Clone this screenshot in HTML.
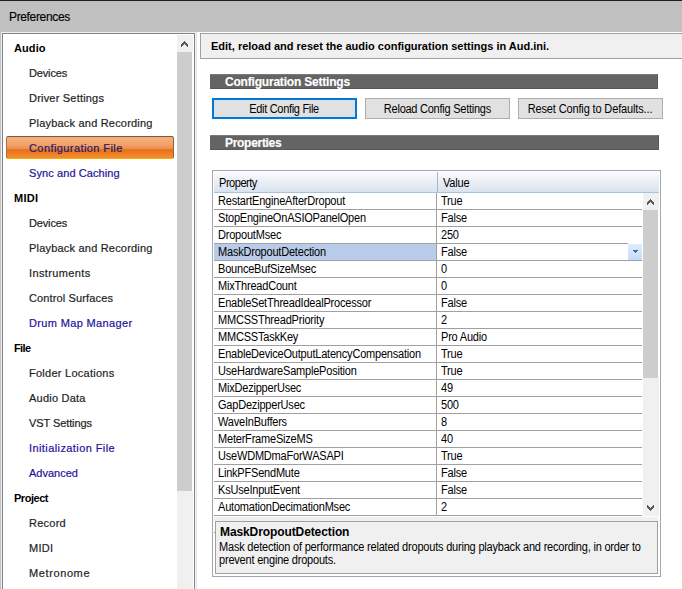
<!DOCTYPE html>
<html><head><meta charset="utf-8">
<style>
*{margin:0;padding:0;box-sizing:border-box}
html,body{width:682px;height:589px;overflow:hidden;background:#fff;position:relative;font-family:"Liberation Sans",sans-serif}
.a{position:absolute}
.t{position:absolute;white-space:pre;line-height:13px;font-size:11px;color:#000}
#title{left:0;top:0;width:682px;height:32px;background:#c0c0c0;border-top:1px solid #1e1e1e}
#title .tt{left:9px;top:9px;font-size:12px;line-height:14px;color:#000;letter-spacing:-0.35px;-webkit-text-stroke:0.15px #000}
#lp{left:1px;top:32px;width:195px;height:600px;border-top:1px solid #f0f0f0;border-left:1px solid #f0f0f0}
#lpb{left:2px;top:33px;width:193px;height:600px;border:1px solid #7d838d;background:#fff}
.nav{position:absolute;white-space:pre;font-size:11px;line-height:13px;color:#1e1e1e;-webkit-text-stroke:0.2px currentColor}
.nav.h{font-weight:bold;color:#000;-webkit-text-stroke:0}
.nav.b{color:#24109c}
#sel{left:6px;top:136px;width:168px;height:23px;border-radius:2px;
 background:linear-gradient(#f6b07c 0,#f2a36c 35%,#ec8c52 58%,#e86e12 60%,#ef8026 80%,#f48c34 100%);
 border-top:1px solid #7a5a36;border-left:1px solid #b07040;border-right:1px solid #8a6a40;border-bottom:1px solid #ffac00}
.sb-btn{background:#f0f0f0}
.thumb{background:#cdcdcd}
#hdr{left:200px;top:33px;width:490px;height:26px;background:#f0f0f0;border:1px solid #a0a0a0}
.bar{position:absolute;left:210px;height:15px;background:#646464;border-top:1px solid #7a7a7a;border-right:1px solid #585858;border-bottom:1px solid #585858}
.bar span{position:absolute;left:15px;top:1px;font-weight:bold;font-size:12px;line-height:13px;color:#fff;-webkit-text-stroke:0.15px #fff;letter-spacing:-0.2px;white-space:pre}
.btn{position:absolute;top:98px;width:145px;height:21px;background:#e1e1e1;border:1px solid #adadad;font-size:12px;line-height:21px;text-align:center;letter-spacing:-0.33px;color:#000}
.btn span{display:inline-block;transform:scaleX(0.9167);transform-origin:50% 0;white-space:pre}
.btn.f{border:2px solid #0078d7;line-height:19px}
#grid{left:212px;top:170px;width:449px;height:407px;border:1px solid #a3a7ad;background:#fff}
#gh{left:214px;top:171px;width:445px;height:22px;background:linear-gradient(#fbfcfe,#d9e2ed);border-bottom:1px solid #a9c1dc}
.row{position:absolute;left:214px;width:428px;height:17px;border-bottom:1px solid #a0a0a0}
.row span{position:absolute;top:1px;font-size:12px;line-height:14px;letter-spacing:-0.22px;white-space:pre;color:#000;transform:scaleX(0.9167);transform-origin:0 0}
.row .p{left:4px}
.row .v{left:227px}
.vdiv{position:absolute;left:436px;top:193px;width:1px;height:323px;background:#a0a0a0}
.chev{position:absolute}
.ms{font-size:12px;line-height:14px;letter-spacing:-0.22px;transform:scaleX(0.9167);transform-origin:0 0}
</style></head><body>
<div id="title" class="a"><span class="t tt">Preferences</span></div>
<div class="a" style="left:0;top:32px;width:1px;height:557px;background:#c0c0c0"></div>
<div id="lp" class="a"></div>
<div id="lpb" class="a"></div>
<!-- left scrollbar -->
<div class="a sb-btn" style="left:177px;top:35px;width:16px;height:17px"></div>
<div class="a thumb" style="left:177px;top:52px;width:15px;height:439px"></div>
<div class="a sb-btn" style="left:177px;top:491px;width:16px;height:100px"></div>
<svg class="a" style="left:181px;top:41px" width="7" height="6" shape-rendering="crispEdges"><path fill="#5a5a5a" d="M3 0h1v1h-1zM2 1h1v1h-1zM3 1h1v1h-1zM4 1h1v1h-1zM1 2h1v1h-1zM2 2h1v1h-1zM3 2h1v1h-1zM4 2h1v1h-1zM5 2h1v1h-1zM0 3h1v1h-1zM1 3h1v1h-1zM2 3h1v1h-1zM4 3h1v1h-1zM5 3h1v1h-1zM6 3h1v1h-1zM0 4h1v1h-1zM1 4h1v1h-1zM5 4h1v1h-1zM6 4h1v1h-1zM0 5h1v1h-1zM6 5h1v1h-1z"/></svg>
<div id="sel" class="a"></div>
<div class="nav h" style="left:14px;top:42px;letter-spacing:0.1px">Audio</div>
<div class="nav" style="left:29px;top:67px;letter-spacing:-0.15px">Devices</div>
<div class="nav" style="left:29px;top:92px;letter-spacing:0.2px">Driver Settings</div>
<div class="nav" style="left:29px;top:117px;letter-spacing:0.2px">Playback and Recording</div>
<div class="nav b" style="color:#1c1c6e;left:29px;top:142px;letter-spacing:0.42px">Configuration File</div>
<div class="nav b" style="left:29px;top:167px;letter-spacing:0.09px">Sync and Caching</div>
<div class="nav h" style="left:14px;top:192px;letter-spacing:0.3px">MIDI</div>
<div class="nav" style="left:29px;top:217px;letter-spacing:-0.15px">Devices</div>
<div class="nav" style="left:29px;top:242px;letter-spacing:0.2px">Playback and Recording</div>
<div class="nav" style="left:29px;top:267px;letter-spacing:0.37px">Instruments</div>
<div class="nav" style="left:29px;top:292px;letter-spacing:0.13px">Control Surfaces</div>
<div class="nav b" style="left:29px;top:317px;letter-spacing:0.35px">Drum Map Manager</div>
<div class="nav h" style="left:14px;top:342px;letter-spacing:-0.62px">File</div>
<div class="nav" style="left:29px;top:367px;letter-spacing:0.26px">Folder Locations</div>
<div class="nav" style="left:29px;top:392px;letter-spacing:0.22px">Audio Data</div>
<div class="nav" style="left:29px;top:417px;letter-spacing:-0.09px">VST Settings</div>
<div class="nav b" style="left:29px;top:442px;letter-spacing:0.41px">Initialization File</div>
<div class="nav b" style="left:29px;top:467px;letter-spacing:0.0px">Advanced</div>
<div class="nav h" style="left:14px;top:492px;letter-spacing:-0.47px">Project</div>
<div class="nav" style="left:29px;top:517px;letter-spacing:0.24px">Record</div>
<div class="nav" style="left:29px;top:542px;letter-spacing:0.3px">MIDI</div>
<div class="nav" style="left:29px;top:567px;letter-spacing:0.61px">Metronome</div>
<!-- splitter -->
<div class="a" style="left:195px;top:32px;width:1px;height:557px;background:#f4f4f4"></div>
<div class="a" style="left:196px;top:32px;width:1px;height:557px;background:#e3e3e3"></div>
<!-- header -->
<div id="hdr" class="a"><span class="t" style="left:10px;top:6px;font-weight:bold">Edit, reload and reset the audio configuration settings in Aud.ini.</span></div>
<div class="bar" style="top:74px;width:448px"><span>Configuration Settings</span></div>
<div class="btn f" style="left:212px"><span>Edit Config File</span></div>
<div class="btn" style="left:365px;letter-spacing:-0.27px"><span>Reload Config Settings</span></div>
<div class="btn" style="left:518px;letter-spacing:-0.15px"><span>Reset Config to Defaults...</span></div>
<div class="bar" style="top:135px;width:449px"><span style="letter-spacing:-0.3px">Properties</span></div>
<!-- grid -->
<div id="grid" class="a"></div>
<div id="gh" class="a"></div>
<div class="a" style="left:437px;top:172px;width:1px;height:20px;background:#a2b7d0"></div>
<span class="t ms" style="left:219px;top:176px;letter-spacing:-0.5px">Property</span>
<span class="t ms" style="left:443px;top:176px">Value</span>
<div id="rows">
<div class="row" style="top:193px"><span class="p">RestartEngineAfterDropout</span><span class="v">True</span></div>
<div class="row" style="top:210px"><span class="p">StopEngineOnASIOPanelOpen</span><span class="v">False</span></div>
<div class="row" style="top:227px"><span class="p">DropoutMsec</span><span class="v">250</span></div>
<div class="row" style="top:244px"><div class="a" style="left:0;top:0;width:222px;height:16px;background:#b8cbe9"></div><span class="p">MaskDropoutDetection</span><span class="v">False</span></div>
<div class="row" style="top:261px"><span class="p">BounceBufSizeMsec</span><span class="v">0</span></div>
<div class="row" style="top:278px"><span class="p">MixThreadCount</span><span class="v">0</span></div>
<div class="row" style="top:295px"><span class="p">EnableSetThreadIdealProcessor</span><span class="v">False</span></div>
<div class="row" style="top:312px"><span class="p">MMCSSThreadPriority</span><span class="v">2</span></div>
<div class="row" style="top:329px"><span class="p">MMCSSTaskKey</span><span class="v">Pro Audio</span></div>
<div class="row" style="top:346px"><span class="p">EnableDeviceOutputLatencyCompensation</span><span class="v">True</span></div>
<div class="row" style="top:363px"><span class="p">UseHardwareSamplePosition</span><span class="v">True</span></div>
<div class="row" style="top:380px"><span class="p">MixDezipperUsec</span><span class="v">49</span></div>
<div class="row" style="top:397px"><span class="p">GapDezipperUsec</span><span class="v">500</span></div>
<div class="row" style="top:414px"><span class="p">WaveInBuffers</span><span class="v">8</span></div>
<div class="row" style="top:431px"><span class="p">MeterFrameSizeMS</span><span class="v">40</span></div>
<div class="row" style="top:448px"><span class="p">UseWDMDmaForWASAPI</span><span class="v">True</span></div>
<div class="row" style="top:465px"><span class="p">LinkPFSendMute</span><span class="v">False</span></div>
<div class="row" style="top:482px"><span class="p">KsUseInputEvent</span><span class="v">False</span></div>
<div class="row" style="top:499px"><span class="p">AutomationDecimationMsec</span><span class="v">2</span></div>
</div>
<div class="vdiv"></div>
<div class="a" style="left:628px;top:243px;width:14px;height:1px;background:#fff"></div>
<!-- dropdown -->
<div class="a" style="left:628px;top:244px;width:14px;height:16px;background:linear-gradient(#e0ebfc,#c6dbf8)"></div>
<svg class="a" style="left:633px;top:250px" width="5" height="3" shape-rendering="crispEdges"><path fill="#4068a8" d="M0 0h5v1h-5zM1 1h3v1h-3zM2 2h1v1h-1z"/></svg>
<!-- grid scrollbar -->
<div class="a sb-btn" style="left:643px;top:193px;width:16px;height:17px"></div>
<div class="a thumb" style="left:643px;top:210px;width:15px;height:168px"></div>
<div class="a sb-btn" style="left:643px;top:378px;width:16px;height:138px"></div>
<svg class="a" style="left:647px;top:199px" width="7" height="6" shape-rendering="crispEdges"><path fill="#5a5a5a" d="M3 0h1v1h-1zM2 1h1v1h-1zM3 1h1v1h-1zM4 1h1v1h-1zM1 2h1v1h-1zM2 2h1v1h-1zM3 2h1v1h-1zM4 2h1v1h-1zM5 2h1v1h-1zM0 3h1v1h-1zM1 3h1v1h-1zM2 3h1v1h-1zM4 3h1v1h-1zM5 3h1v1h-1zM6 3h1v1h-1zM0 4h1v1h-1zM1 4h1v1h-1zM5 4h1v1h-1zM6 4h1v1h-1zM0 5h1v1h-1zM6 5h1v1h-1z"/></svg>
<svg class="a" style="left:647px;top:505px" width="7" height="6" shape-rendering="crispEdges"><path fill="#5a5a5a" d="M3 5h1v1h-1zM2 4h1v1h-1zM3 4h1v1h-1zM4 4h1v1h-1zM1 3h1v1h-1zM2 3h1v1h-1zM3 3h1v1h-1zM4 3h1v1h-1zM5 3h1v1h-1zM0 2h1v1h-1zM1 2h1v1h-1zM2 2h1v1h-1zM4 2h1v1h-1zM5 2h1v1h-1zM6 2h1v1h-1zM0 1h1v1h-1zM1 1h1v1h-1zM5 1h1v1h-1zM6 1h1v1h-1zM0 0h1v1h-1zM6 0h1v1h-1z"/></svg>
<!-- description -->
<div class="a" style="left:214px;top:532px;width:1px;height:1px;background:#8c8c8c;z-index:2"></div>
<div class="a" style="left:213px;top:516px;width:446px;height:60px;background:#fff"></div>
<div class="a" style="left:214px;top:517px;width:444px;height:4px;background:#f0f0f0"></div>
<div class="a" style="left:215px;top:521px;width:443px;height:53px;background:#f0f0f0;border:1px solid #a0a0a0"></div>
<span class="t" style="left:220px;top:525px;font-weight:bold;font-size:12px;line-height:14px;letter-spacing:-0.1px">MaskDropoutDetection</span>
<span class="t ms" style="left:219px;top:540px">Mask detection of performance related dropouts during playback and recording, in order to</span>
<span class="t ms" style="left:219px;top:553px">prevent engine dropouts.</span>
</body></html>
